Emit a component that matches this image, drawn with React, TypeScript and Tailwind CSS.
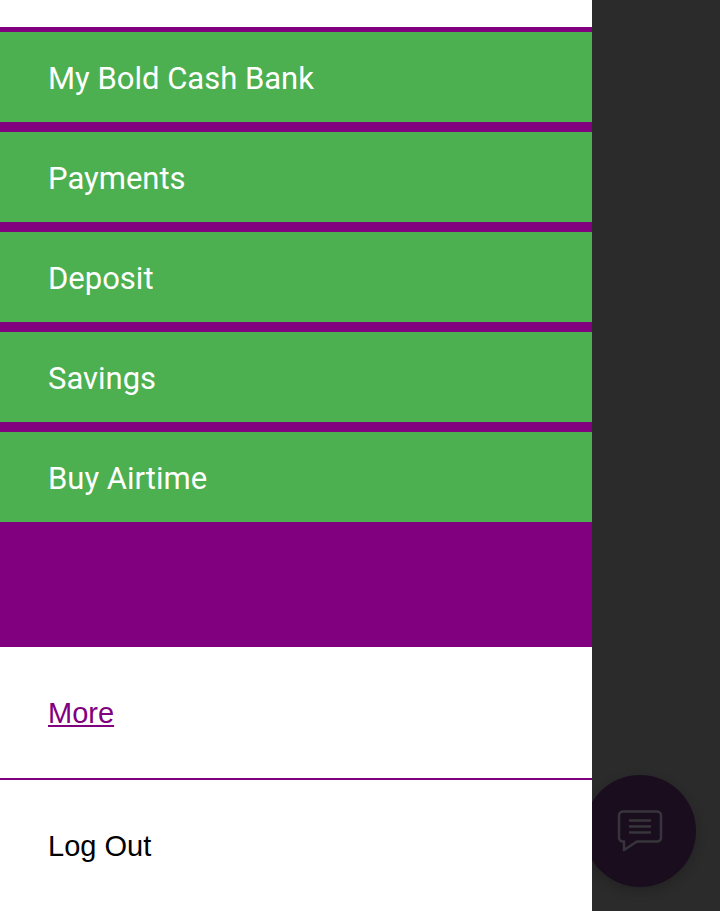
import React from 'react';

const menuItems = ['My Bold Cash Bank', 'Payments', 'Deposit', 'Savings', 'Buy Airtime'];

function ChatIcon() {
  return (
    <svg width="46" height="44" viewBox="0 0 46 44" fill="none" stroke="#38343b" strokeWidth="2.5">
      <path d="M6 2.500h34a4 4 0 0 1 4 4v22a4 4 0 0 1-4 4H20L7 41v-8.500H6a4 4 0 0 1-4-4v-22a4 4 0 0 1 4-4z" strokeLinejoin="round" />
      <path d="M12 11.500h22M12 17.500h22M12 23.500h22" />
    </svg>
  );
}

export default function App() {
  return (
    <div className="flex h-[911px] w-[720px] overflow-hidden bg-white font-['Liberation_Sans',sans-serif]">
      <nav className="z-10 flex w-[592px] flex-col bg-white">
        <div className="mt-[27px] flex flex-col gap-[10px] border-t-[5px] border-[#800080] bg-[#800080] pb-[125px]">
          {menuItems.map((item) => (
            <a
              key={item}
              className="flex h-[90px] items-center bg-[#4caf50] pt-1 pl-12 font-['Roboto',sans-serif] text-[31px] text-white"
            >
              {item}
            </a>
          ))}
        </div>
        <div className="flex h-[131px] items-center pt-0.5 pl-12">
          <a className="text-[29px] text-[#800080] underline">More</a>
        </div>
        <div className="flex flex-1 items-center border-t-2 border-[#800080] pt-0.5 pl-12">
          <a className="text-[29px] text-black">Log Out</a>
        </div>
      </nav>
      <div className="relative flex-1 bg-[#2b2b2b]">
        <button className="absolute top-[775px] left-[-8px] flex h-[112px] w-[112px] items-center justify-center rounded-full bg-[#1a0e1e] shadow-[0_4px_12px_rgba(0,0,0,0.2)]">
          <ChatIcon />
        </button>
      </div>
    </div>
  );
}
